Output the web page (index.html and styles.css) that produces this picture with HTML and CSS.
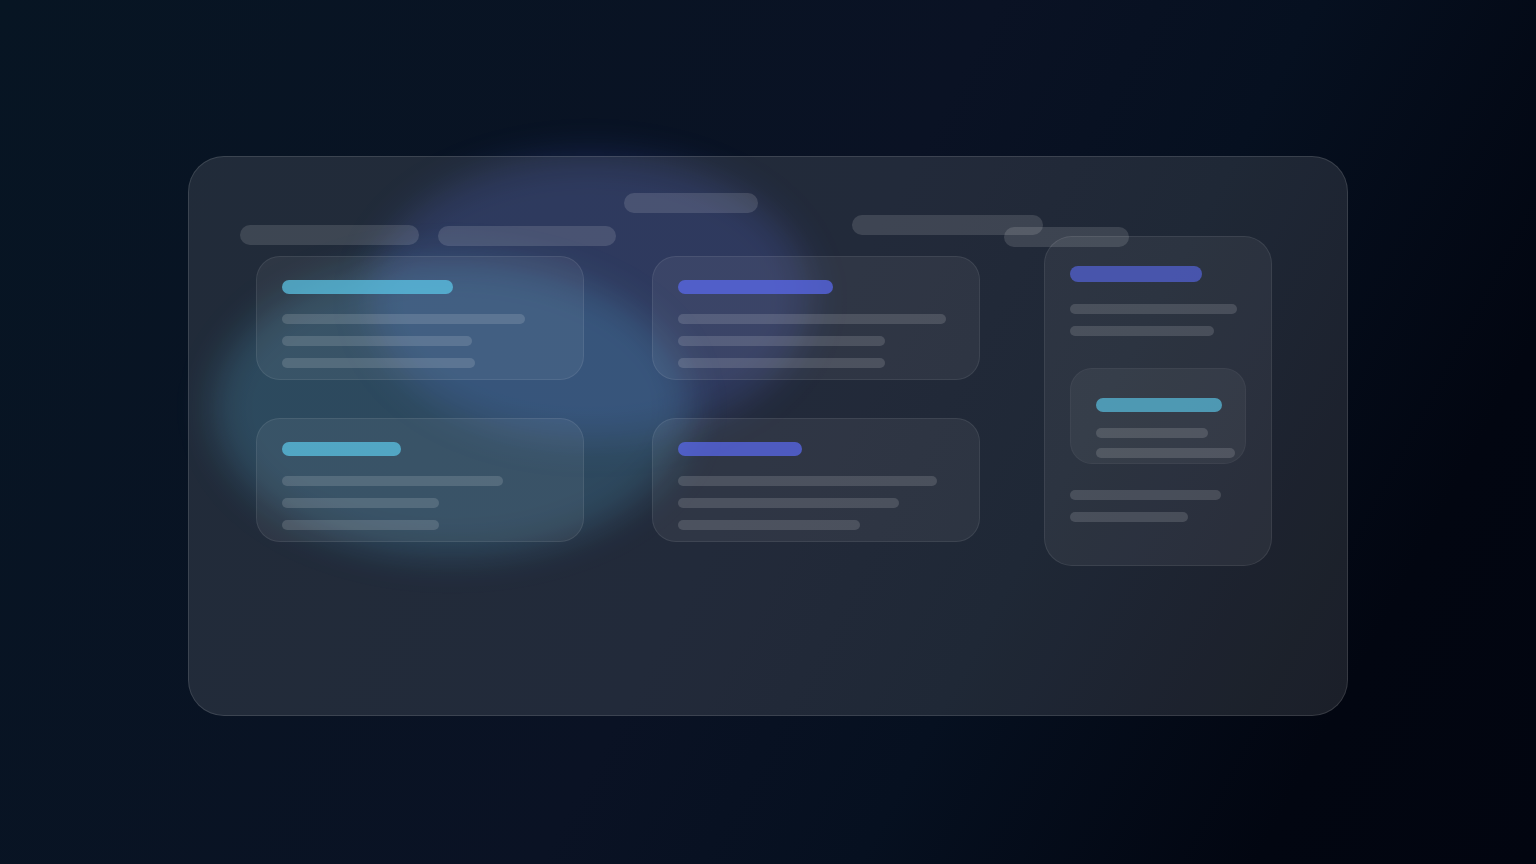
FILE: index.html
```html
<!DOCTYPE html>
<html lang="en">
<head>
    <meta charset="UTF-8">
    <meta name="viewport" content="width=device-width, initial-scale=1.0">
    <title>Dashboard</title>
    <link rel="stylesheet" href="styles.css">
</head>
<body>

    <div class="stage">
        <!-- Blurred glows behind the glass -->
        <div class="glow glow-indigo"></div>
        <div class="glow glow-cyan"></div>

        <main class="panel">
            <header class="chips">
                <span class="chip chip-one"></span>
                <span class="chip chip-two"></span>
                <span class="chip chip-three"></span>
                <span class="chip chip-four"></span>
                <span class="chip chip-five"></span>
            </header>

            <div class="content">
                <section class="cards">
                    <article class="card">
                        <div class="title cyan" style="width: 62%"></div>
                        <div class="line" style="width: 88%"></div>
                        <div class="line" style="width: 69%"></div>
                        <div class="line" style="width: 70%"></div>
                    </article>
                    <article class="card">
                        <div class="title indigo" style="width: 56%"></div>
                        <div class="line" style="width: 97%"></div>
                        <div class="line" style="width: 75%"></div>
                        <div class="line" style="width: 75%"></div>
                    </article>
                    <article class="card">
                        <div class="title cyan" style="width: 43%"></div>
                        <div class="line" style="width: 80%"></div>
                        <div class="line" style="width: 57%"></div>
                        <div class="line" style="width: 57%"></div>
                    </article>
                    <article class="card">
                        <div class="title indigo" style="width: 45%"></div>
                        <div class="line" style="width: 94%"></div>
                        <div class="line" style="width: 80%"></div>
                        <div class="line" style="width: 66%"></div>
                    </article>
                </section>

                <aside class="sidebar">
                    <div class="title indigo" style="width: 75%"></div>
                    <div class="line" style="width: 95%"></div>
                    <div class="line" style="width: 82%"></div>
                    <div class="widget">
                        <div class="title cyan" style="width: 100%"></div>
                        <div class="line" style="width: 89%"></div>
                        <div class="line" style="width: 110%"></div>
                    </div>
                    <div class="line" style="width: 86%"></div>
                    <div class="line" style="width: 67%"></div>
                </aside>
            </div>
        </main>
    </div>

</body>
</html>
```

FILE: styles.css
```css
* {
    box-sizing: border-box;
}
body {
    margin: 0;
    min-height: 100vh;
    padding: 8px 188px 0;
    display: flex;
    align-items: center;
    background: linear-gradient(118deg, #071523 0%, #0a1224 50%, #061020 66%, #020611 86%, #020510 100%);
    font-family: "Liberation Sans", Arial, sans-serif;
}
.stage {
    position: relative;
    flex: 1;
}
.glow {
    position: absolute;
    border-radius: 50%;
    filter: blur(18px);
}
.glow-indigo {
    left: 182px;
    top: 0;
    width: 440px;
    height: 284px;
    background: rgba(80, 104, 240, 0.2);
}
.glow-cyan {
    left: 26px;
    top: 104px;
    width: 476px;
    height: 296px;
    background: rgba(76, 192, 238, 0.2);
}
.panel {
    position: relative;
    padding: 36px 75px 149px 67px;
    border: 1px solid rgba(255, 255, 255, 0.12);
    border-radius: 36px;
    background: rgba(255, 255, 255, 0.1);
}

/* Chips float above the cards at staggered heights */
.chips {
    display: flex;
    align-items: flex-start;
    height: 43px;
    margin: 0 -16px;
}
.chip {
    flex: none;
    height: 20px;
    border-radius: 10px;
    background: rgba(255, 255, 255, 0.13);
}
.chip-one {
    width: 179px;
    margin-top: 32px;
}
.chip-two {
    width: 178px;
    margin-top: 33px;
    margin-left: 19px;
}
.chip-three {
    width: 134px;
    margin-left: 8px;
}
.chip-four {
    width: 191px;
    margin-top: 22px;
    margin-left: 94px;
}
.chip-five {
    width: 125px;
    margin-top: 34px;
    margin-left: -39px;
}

.content {
    display: flex;
    align-items: flex-start;
    gap: 64px;
}
.cards {
    flex: 1;
    display: grid;
    grid-template-columns: 1fr 1fr;
    gap: 38px 68px;
    margin-top: 20px;
}
.card {
    padding: 23px 25px 11px;
    border: 1px solid rgba(255, 255, 255, 0.08);
    border-radius: 24px;
    background: rgba(255, 255, 255, 0.06);
}
.title {
    height: 14px;
    border-radius: 7px;
    margin-bottom: 20px;
}
.cyan {
    background: rgba(92, 203, 237, 0.7);
}
.indigo {
    background: rgba(90, 106, 240, 0.72);
}
.line {
    height: 10px;
    border-radius: 5px;
    background: rgba(255, 255, 255, 0.14);
}
.line + .line {
    margin-top: 12px;
}

.sidebar {
    width: 228px;
    padding: 29px 25px 43px;
    border: 1px solid rgba(255, 255, 255, 0.08);
    border-radius: 28px;
    background: rgba(255, 255, 255, 0.06);
}
.sidebar > .title {
    height: 16px;
    border-radius: 8px;
    margin-bottom: 22px;
    opacity: 0.85;
}
.widget {
    margin: 32px 0 26px;
    padding: 29px 23px 5px 25px;
    border: 1px solid rgba(255, 255, 255, 0.04);
    border-radius: 22px;
    background: rgba(255, 255, 255, 0.05);
}
.widget .title {
    margin-bottom: 16px;
    opacity: 0.93;
}
.widget .line + .line {
    margin-top: 10px;
}
```
